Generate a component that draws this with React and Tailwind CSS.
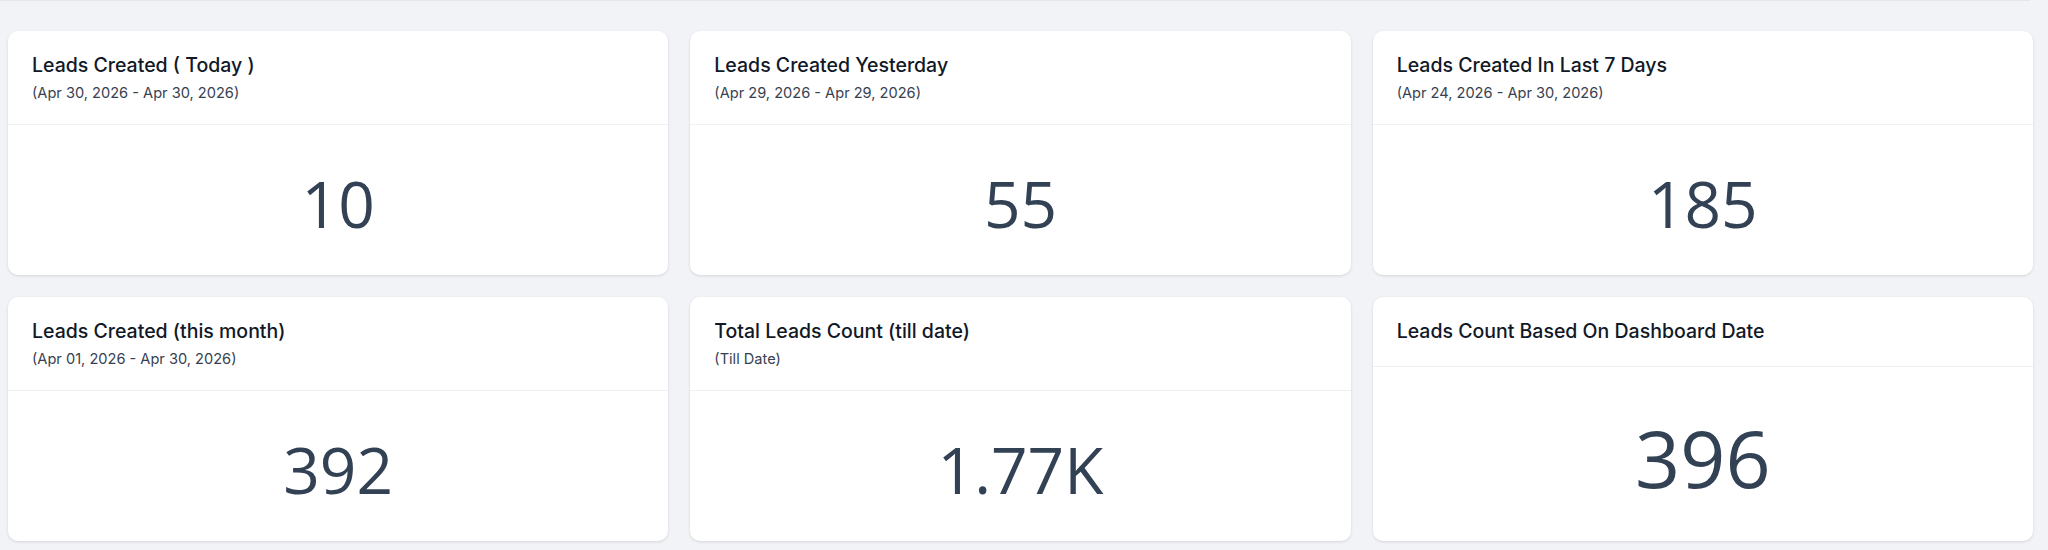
import React from "react";

const cards = [
  { title: "Leads Created ( Today )", sub: "(Apr 30, 2026 - Apr 30, 2026)", value: "10" },
  { title: "Leads Created Yesterday", sub: "(Apr 29, 2026 - Apr 29, 2026)", value: "55" },
  { title: "Leads Created In Last 7 Days", sub: "(Apr 24, 2026 - Apr 30, 2026)", value: "185" },
  { title: "Leads Created (this month)", sub: "(Apr 01, 2026 - Apr 30, 2026)", value: "392" },
  { title: "Total Leads Count (till date)", sub: "(Till Date)", value: "1.77K" },
  { title: "Leads Count Based On Dashboard Date", sub: null, value: "396", big: true },
];

function Card({ title, sub, value, big }) {
  return (
    <div className="flex h-[244px] flex-col rounded-[10px] bg-white shadow-[0_1px_3px_rgba(0,0,0,0.12)]">
      <div className="border-b border-[#eef0f3] px-6 pt-5 pb-[21px]">
        <div className="text-[19.5px] leading-[28px] font-medium text-[#111827]">{title}</div>
        {sub && <div className="mt-[4px] text-[14.6px] leading-[20px] text-[#374151]">{sub}</div>}
      </div>
      <div className="flex flex-1 items-center justify-center pt-[7px]">
        <span
          className={
            big
              ? "text-[79px] leading-none font-normal text-[#334155]"
              : "text-[64px] leading-none font-normal text-[#334155]"
          }
          style={{ fontFamily: "'Open Sans', 'Noto Sans', sans-serif" }}
        >
          {value}
        </span>
      </div>
    </div>
  );
}

export default function App() {
  return (
    <div
      className="min-h-[550px] w-full bg-[#f2f3f7]"
      style={{ fontFamily: "Inter, 'Noto Sans', sans-serif" }}
    >
      <div className="w-[2030px] border-t border-[#e4e6ea]" />
      <div className="grid grid-cols-3 gap-[22px] pt-[30px] pl-2 pr-[15px]">
        {cards.map((c) => (
          <Card key={c.title} {...c} />
        ))}
      </div>
    </div>
  );
}
